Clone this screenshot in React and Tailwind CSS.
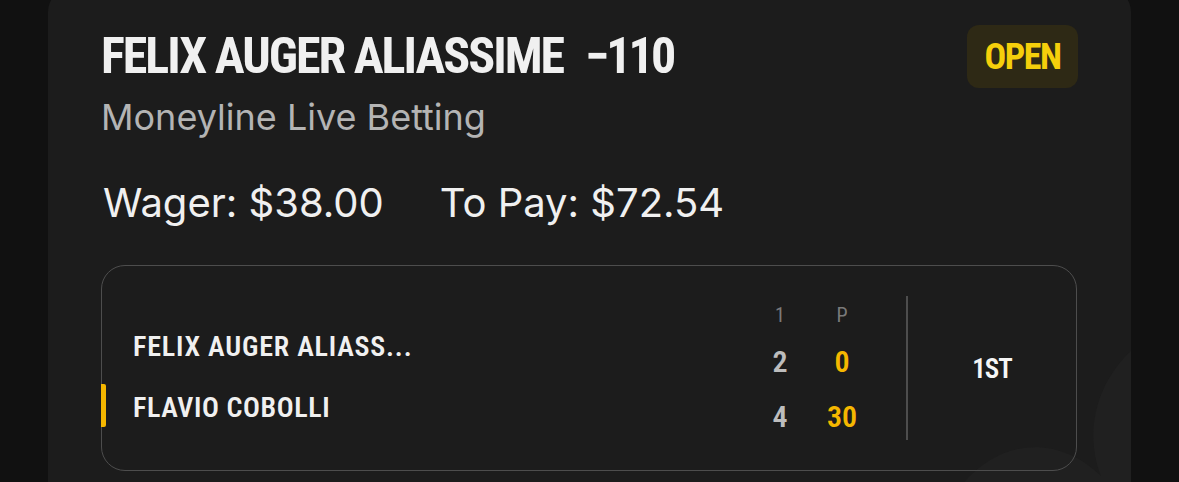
import React from "react";

const cond = { fontFamily: '"Roboto Condensed", "DejaVu Sans Condensed", sans-serif' };
const body = { fontFamily: 'Inter, "Noto Sans", sans-serif' };

export default function App() {
  return (
    <div className="w-[1179px] h-[482px] overflow-hidden bg-[#111111] px-[48px]">
      <div className="relative mt-[-12px] h-[540px] overflow-hidden rounded-[24px] bg-[#1c1c1c] px-[53px] pt-[37px]">
        <svg className="absolute right-[-20px] top-[338px]" width="300" height="220" viewBox="0 0 300 220">
          <path d="M110 160 C 150 110, 210 110, 250 150 C 230 100, 250 40, 300 10 L 300 220 L 60 220 C 80 200, 95 180, 110 160 Z" fill="#202020" />
        </svg>

        <div className="relative flex items-start justify-between">
          <div className="mt-[6px] flex items-baseline text-[50px] font-bold leading-[50px] tracking-[-2px] text-[#f0f0f0]" style={cond}>
            <span>FELIX AUGER ALIASSIME</span>
            <span className="ml-[22px] tracking-[-3px]">−110</span>
          </div>
          <div className="flex h-[63px] w-[111px] items-center justify-center rounded-[12px] bg-[#2e2915] text-[36px] font-bold tracking-[-1.5px] text-[#f5cf0b]" style={cond}>
            OPEN
          </div>
        </div>

        <div className="relative mt-[9px] text-[36px] leading-[40px] text-[#b4b4b4]" style={body}>
          Moneyline Live Betting
        </div>

        <div className="relative ml-[2px] mt-[43px] flex text-[40px] leading-[46px] text-[#f0f0f0]" style={body}>
          <span>Wager: $38.00</span>
          <span className="ml-[56px]">To Pay: $72.54</span>
        </div>

        <div className="relative mt-[39px] flex h-[206px] w-[976px] rounded-[24px] border border-[#4d4d4d]">
          <div className="relative flex flex-1 flex-col justify-center pl-[31px] pt-[18px] text-[28px] font-semibold leading-[28px] tracking-[0.8px] text-[#f0f0f0]" style={cond}>
            <div className="h-[28px]">FELIX AUGER ALIASS...</div>
            <div className="relative mt-[33px] h-[28px] tracking-[0.6px]">
              <span className="absolute left-[-32px] top-[-10px] h-[43px] w-[5px] rounded-r-[2px] bg-[#f5b700]" />
              FLAVIO COBOLLI
            </div>
          </div>

          <div className="flex flex-col items-center pt-[39px]" style={cond}>
            <div className="flex text-[20px] leading-[20px] text-[#7a7a7a]">
              <span className="w-[40px] text-center">1</span>
              <span className="ml-[22px] w-[40px] text-center">P</span>
            </div>
            <div className="mt-[22px] flex text-[30px] font-semibold leading-[30px]">
              <span className="w-[40px] text-center text-[#bdbdbd]">2</span>
              <span className="ml-[22px] w-[40px] text-center text-[#f5b700]">0</span>
            </div>
            <div className="mt-[25px] flex text-[30px] font-semibold leading-[30px]">
              <span className="w-[40px] text-center text-[#bdbdbd]">4</span>
              <span className="ml-[22px] w-[40px] text-center text-[#f5b700]">30</span>
            </div>
          </div>

          <div className="ml-[44px] mt-[30px] h-[144px] w-[2px] bg-[#4d4d4d]" />

          <div className="flex w-[168px] items-center justify-center pt-[2px] text-[27px] font-semibold tracking-[-1px] text-[#f5f5f5]" style={cond}>
            1ST
          </div>
        </div>
      </div>
    </div>
  );
}
